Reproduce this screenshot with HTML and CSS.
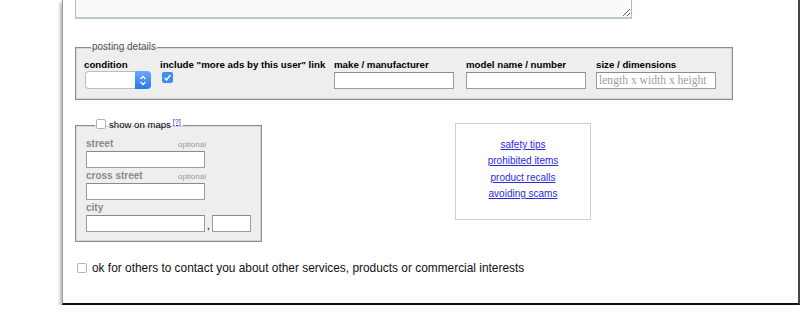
FILE: index.html
```html
<!DOCTYPE html>
<html>
<head>
<meta charset="utf-8">
<link rel="stylesheet" href="styles.css">
</head>
<body>
<div class="page">
  <textarea class="body-text"></textarea>

  <fieldset class="details">
    <legend>posting details</legend>
    <div class="cols">
      <div class="col col-cond">
        <label class="lbl">condition</label>
        <div class="select">
          <span class="select-val"></span>
          <span class="select-arrow">
            <svg width="8" height="11" viewBox="0 0 8 11"><path d="M1.5 4 L4 1.5 L6.5 4 M1.5 7 L4 9.5 L6.5 7" fill="none" stroke="#fff" stroke-width="1.3"/></svg>
          </span>
        </div>
      </div>
      <div class="col col-inc">
        <label class="lbl">include "more ads by this user" link</label>
        <span class="check checked">
          <svg width="11" height="11" viewBox="0 0 11 11"><path d="M2.6 5.8 L4.6 7.9 L8.4 3" fill="none" stroke="#fff" stroke-width="1.4"/></svg>
        </span>
      </div>
      <div class="col col-make">
        <label class="lbl">make / manufacturer</label>
        <input class="txt" type="text">
      </div>
      <div class="col col-model">
        <label class="lbl">model name / number</label>
        <input class="txt" type="text">
      </div>
      <div class="col col-size">
        <label class="lbl">size / dimensions</label>
        <input class="txt" type="text" placeholder="length x width x height">
      </div>
    </div>
  </fieldset>

  <div class="row">
    <fieldset class="maps">
      <legend><span class="check small"></span><span class="maps-title">show on maps</span><sup><a href="#" class="help">[?]</a></sup></legend>
      <div class="grp">
        <div class="lrow"><span class="glbl">street</span><span class="opt">optional</span></div>
        <input class="txt wide" type="text">
      </div>
      <div class="grp">
        <div class="lrow"><span class="glbl">cross street</span><span class="opt">optional</span></div>
        <input class="txt wide" type="text">
      </div>
      <div class="grp">
        <div class="lrow"><span class="glbl">city</span></div>
        <div class="cityrow"><input class="txt wide" type="text"><span class="comma">,</span><input class="txt tiny" type="text"></div>
      </div>
    </fieldset>

    <div class="links">
      <a href="#">safety tips</a>
      <a href="#">prohibited items</a>
      <a href="#">product recalls</a>
      <a href="#">avoiding scams</a>
    </div>
  </div>

  <div class="contact">
    <span class="check"></span>
    <span class="contact-text">ok for others to contact you about other services, products or commercial interests</span>
  </div>
</div>
</body>
</html>
```

FILE: styles.css
```css
html, body {
  margin: 0;
  padding: 0;
  background: #fff;
  font-family: "Liberation Sans", Arial, sans-serif;
}

.page {
  box-sizing: border-box;
  margin-left: 62px;
  width: 738px;
  height: 305px;
  padding-left: 12px;
  background: #fff;
  border-left: 1px solid #9a9a9a;
  border-right: 2px solid #444;
  border-bottom: 2px solid #111;
  box-shadow: -2px 2px 3px rgba(0,0,0,0.25), 0 4px 4px rgba(0,0,0,0.12);
  overflow: hidden;
}

.body-text {
  display: block;
  box-sizing: border-box;
  width: 557px;
  height: 60px;
  margin: -41px 0 0 0;
  background: #fafafa;
  border: 1px solid #a9c4a9;
  border-bottom: 2px solid #b9cdb9;
  outline: none;
}

fieldset {
  margin: 0;
  min-width: 0;
  background: #eeeeee;
  border: 1px solid #8c8c8c;
  box-shadow: inset 0 0 0 1px #d6d6d6;
}

legend {
  font-size: 10px;
  line-height: 12px;
  color: #555;
  padding: 0 1px;
  margin-left: 7px;
}

.details {
  box-sizing: border-box;
  width: 658px;
  margin-top: 22px;
  padding: 6px 8px 10px 8px;
}

.cols {
  display: flex;
}

.col {
  display: flex;
  flex-direction: column;
  align-items: flex-start;
}

.col-cond { width: 76px; }
.col-inc { width: 174px; }
.col-make { width: 131px; }
.col-model { width: 130px; padding-left: 1px; }
.col-size { flex: 1; }

.lbl {
  font-size: 9.7px;
  line-height: 12px;
  font-weight: bold;
  color: #000;
  white-space: nowrap;
}

.select {
  display: flex;
  width: 66px;
  height: 18px;
  margin-left: 1px;
  box-sizing: border-box;
}

.select-val {
  flex: 1;
  background: #fff;
  border: 1px solid #bdbdbd;
  border-right: none;
  border-radius: 4px 0 0 4px;
}

.select-arrow {
  width: 16px;
  display: flex;
  align-items: center;
  justify-content: center;
  background: linear-gradient(#6aa8fb, #2a78ee);
  border-radius: 0 4px 4px 0;
}

.check {
  display: inline-flex;
  box-sizing: border-box;
  width: 10px;
  height: 10px;
  border: 1px solid #b3b3b3;
  border-radius: 2px;
  background: #fff;
  vertical-align: middle;
}

.check.checked {
  width: 11px;
  height: 11px;
  margin: 1px 0 0 2px;
  border: none;
  background: #3d8ef3;
}

.txt {
  display: block;
  box-sizing: border-box;
  width: 120px;
  height: 17px;
  margin: 1px 0 0 0;
  padding: 0 2px;
  border: 1px solid #9d9d9d;
  border-top-color: #8a8a8a;
  background: #fff;
  font-family: "Liberation Serif", "Times New Roman", serif;
  font-size: 11.6px;
  outline: none;
}

.txt::placeholder {
  color: #a0a0a0;
}

.row {
  display: flex;
  align-items: flex-start;
  margin-top: 19px;
}

.maps {
  box-sizing: border-box;
  width: 187px;
  padding: 7px 10px 9px 10px;
}

.maps legend {
  margin-left: 9px;
  padding: 0 2px 0 1px;
  color: #000;
  font-size: 9.6px;
  line-height: 12px;
}

.check.small {
  margin: -2px 3px 0 0;
}

.maps-title {
  vertical-align: middle;
}

.maps sup {
  font-size: 7px;
  line-height: 0;
  margin-left: 2px;
}

.help {
  color: #2a2ae0;
}

.grp {
  margin-bottom: 2px;
}

.grp:last-child {
  margin-bottom: 0;
}

.lrow {
  display: flex;
  justify-content: space-between;
  align-items: baseline;
  width: 120px;
  height: 12px;
  line-height: 12px;
}

.glbl {
  font-size: 10px;
  font-weight: bold;
  color: #8a8a8a;
}

.opt {
  font-size: 8px;
  color: #999;
}

.cityrow {
  display: flex;
  align-items: flex-end;
}

.wide { width: 119px; }

.comma {
  font-size: 10px;
  width: 9px;
  text-align: center;
  line-height: 12px;
}

.tiny { width: 39px; }

.links {
  box-sizing: border-box;
  width: 136px;
  height: 97px;
  margin: 4px 0 0 193px;
  padding-top: 13px;
  border: 1px solid #cfcfcf;
  background: #fff;
  display: flex;
  flex-direction: column;
  align-items: center;
}

.links a {
  font-size: 10px;
  line-height: 16.4px;
  color: #2a2ae0;
}

.contact {
  display: flex;
  align-items: center;
  margin-top: 19px;
  padding-left: 2px;
}

.contact-text {
  margin-left: 5px;
  font-size: 11.9px;
  line-height: 14px;
  color: #111;
}
```
